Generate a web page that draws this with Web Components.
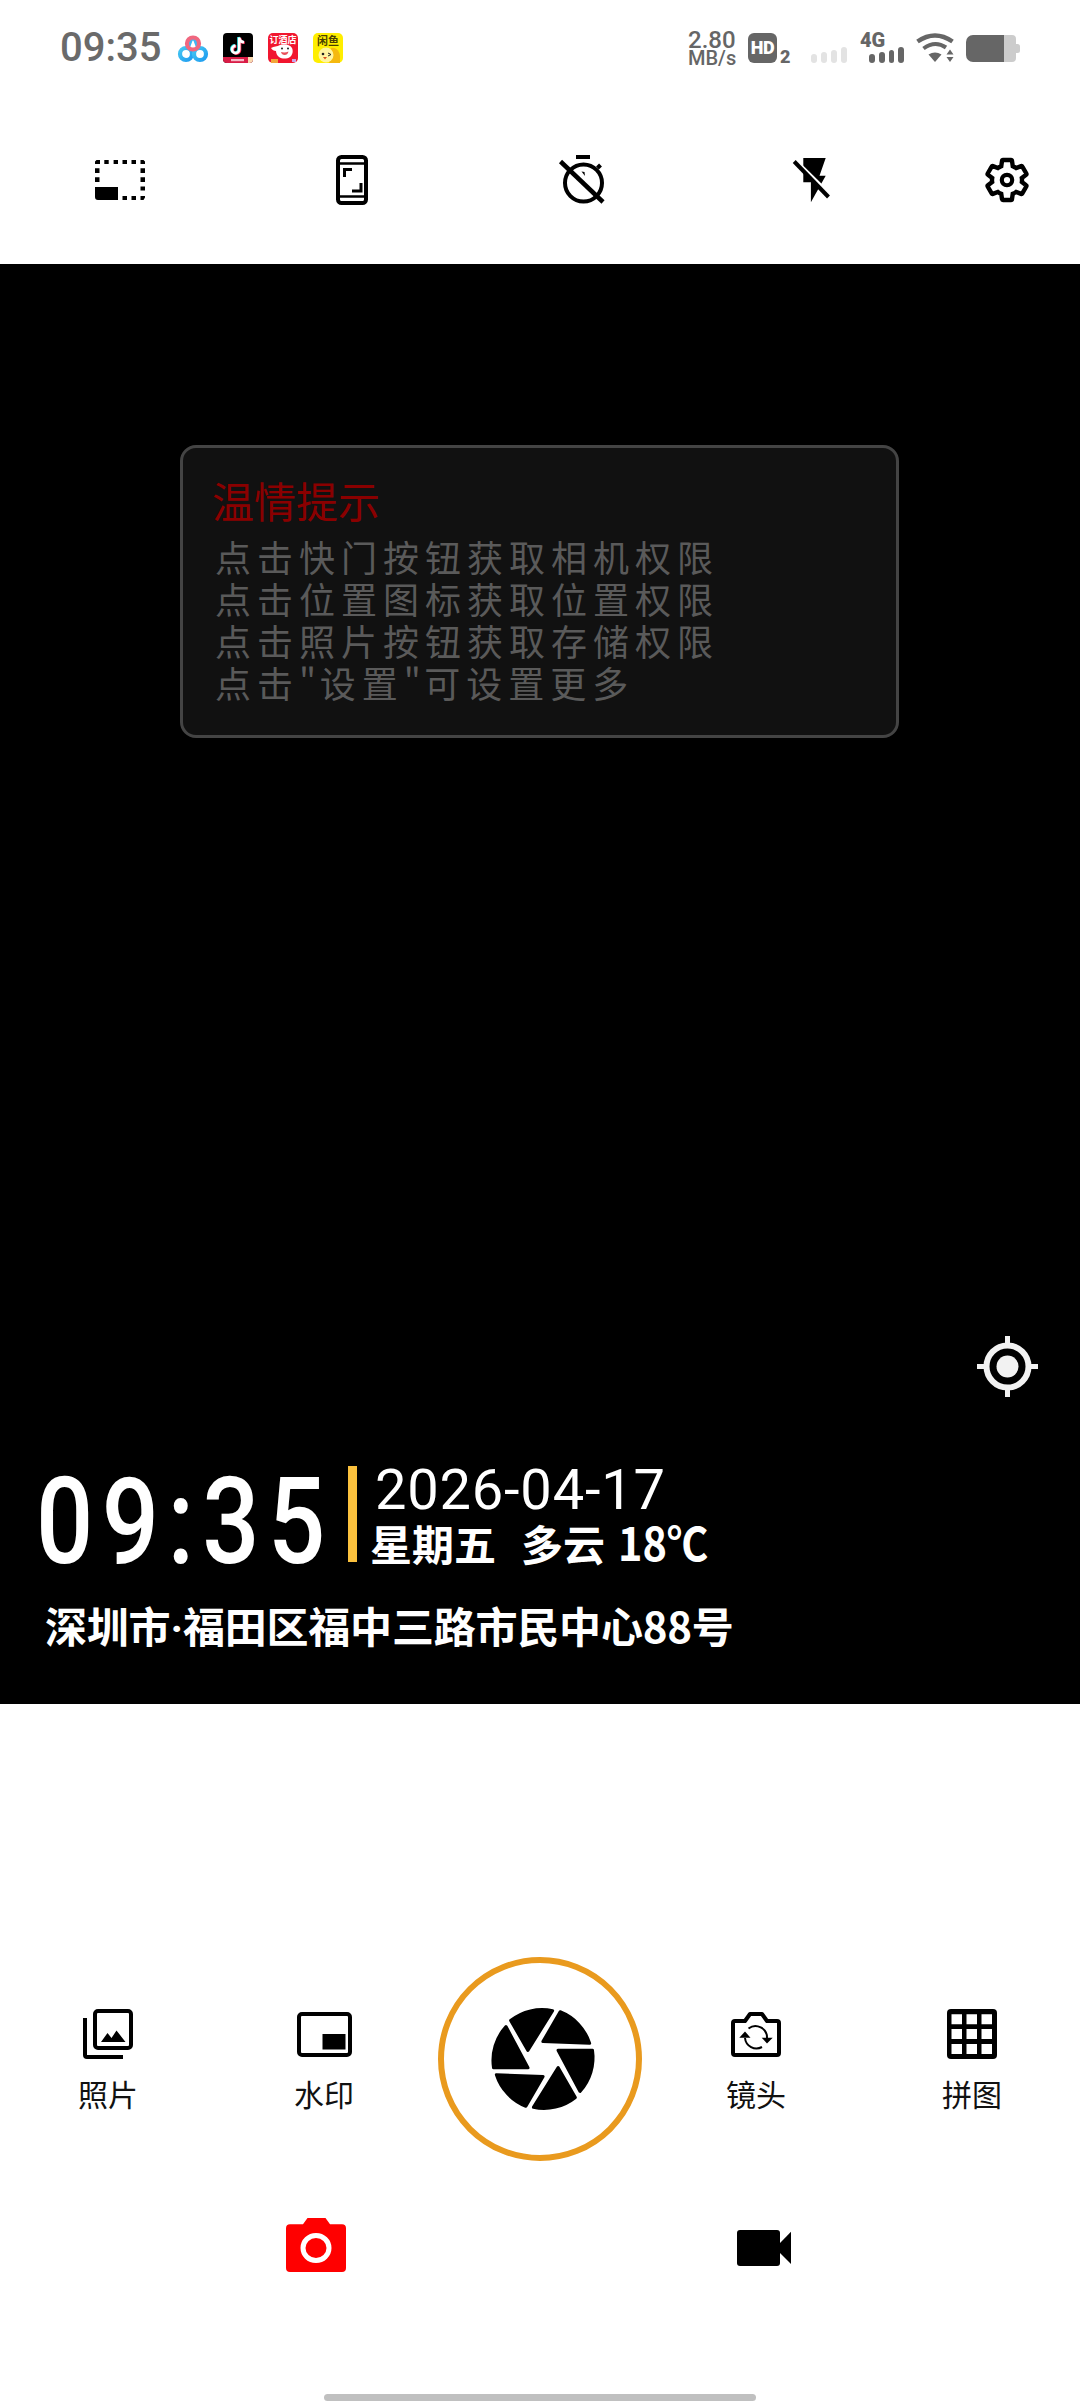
<!DOCTYPE html>
<html lang="zh">
<head>
<meta charset="utf-8">
<title>水印相机</title>
<style>
  html, body { margin: 0; padding: 0; background: #fff; }
  body { font-family: Roboto, "Noto Sans CJK SC", sans-serif; }
</style>
</head>
<body>
<camera-page></camera-page>

<script>
// every icon keeps its own box so it can sit in the flow at its real size
const ICONS = {
  crop: { w: 50, h: 40, svg: `
    <path fill="#000" d="M0 27h23v13H3a3 3 0 0 1-3-3zM1.500 0H5v4H0V1.500zM9.300 0h4.400v4H9.300zM18.600 0H23v4h-4.400zM27.500 0H32v4h-4.500zM36.500 0H41v4h-4.500zM45.500 0h3L50 1.500V4h-4.500zM0 8.300h4.500v4.700H0zM0 17.300h4.500V22H0zM45.500 8.300H50V13h-4.500zM45.500 17.300H50V22h-4.500zM45.500 26.600H50v4h-4.500zM27.500 36H32v4h-4.500zM36.500 36H41v4h-4.500zM45.500 36H50v1.500L48.500 40h-3z"/>` },
  phone: { w: 32, h: 50, svg: `
    <rect x="2" y="2" width="28" height="46" rx="3.500" fill="none" stroke="#000" stroke-width="4"/>
    <path d="M3 8.500h26M3 41.500h26" stroke="#000" stroke-width="2.500"/>
    <path d="M8.500 22v-7.500H16M25 28v8h-9" fill="none" stroke="#000" stroke-width="3"/>` },
  timer: { w: 46, h: 50, svg: `
    <circle cx="24.500" cy="28" r="18.500" fill="none" stroke="#000" stroke-width="4"/>
    <path d="M17 2h14" stroke="#000" stroke-width="4"/>
    <path d="M38.500 13l3-3" stroke="#000" stroke-width="4"/>
    <path d="M22.500 16.500l3 .5.500 4z" fill="#000"/>
    <path d="M1.500 6.500L44 47" stroke="#000" stroke-width="4.500"/>` },
  flash: { w: 37, h: 45, svg: `
    <path fill="#000" d="M10.300 0h22.400l-6.200 17.700h6.200L17.900 44.300V24.300h-7.600z"/>
    <path d="M3.500 3L38 37" stroke="#fff" stroke-width="3"/>
    <path d="M1.200 3.500L35.500 39" stroke="#000" stroke-width="4"/>` },
  gear: { w: 50, h: 50, vb: '0 0 24 24', svg: `
    <path fill="none" stroke="#000" stroke-width="2.100" d="M19.140 12.940c.04-.3.06-.61.06-.94 0-.32-.02-.64-.07-.94l2.030-1.580c.18-.14.23-.41.12-.61l-1.920-3.320c-.12-.22-.37-.29-.59-.22l-2.390.96c-.5-.38-1.030-.7-1.620-.94l-.36-2.540c-.04-.24-.24-.41-.48-.41h-3.840c-.24 0-.43.17-.47.41l-.36 2.540c-.59.24-1.130.57-1.620.94l-2.390-.96c-.22-.08-.47 0-.59.22L2.740 8.870c-.12.21-.08.47.12.61l2.030 1.580c-.05.3-.09.63-.09.94s.02.64.07.94l-2.030 1.580c-.18.14-.23.41-.12.61l1.920 3.320c.12.22.37.29.59.22l2.390-.96c.5.38 1.030.7 1.620.94l.36 2.540c.05.24.24.41.48.41h3.840c.24 0 .44-.17.47-.41l.36-2.540c.59-.24 1.130-.56 1.620-.94l2.390.96c.22.08.47 0 .59-.22l1.920-3.320c.12-.22.07-.47-.12-.61l-2.010-1.580z"/>
    <circle cx="12" cy="12" r="2.500" fill="none" stroke="#000" stroke-width="2"/>` },
  locate: { w: 61, h: 61, svg: `
    <circle cx="30.500" cy="30.500" r="21" fill="none" stroke="#f2f2f2" stroke-width="6"/>
    <circle cx="30.500" cy="30.500" r="11" fill="#f2f2f2"/>
    <path d="M30.500 0v9M30.500 52v9M0 30.500h9M52 30.500h9" stroke="#f2f2f2" stroke-width="5"/>` },
  photos: { w: 50, h: 50, svg: `
    <rect x="12" y="2" width="36" height="37" rx="3" fill="none" stroke="#000" stroke-width="4"/>
    <path d="M2 9v37a2 2 0 0 0 2 2h36" fill="none" stroke="#000" stroke-width="4"/>
    <path fill="#000" d="M18 33l6.500-9 4 5 5-7.500 9 11.500z"/>` },
  pip: { w: 55, h: 45, svg: `
    <rect x="2" y="2" width="51" height="41" rx="3" fill="none" stroke="#000" stroke-width="4"/>
    <rect x="25.500" y="22" width="23" height="15.500" fill="#000"/>` },
  flip: { w: 50, h: 45, svg: `
    <path fill="none" stroke="#000" stroke-width="4" stroke-linejoin="round" d="M4 9h10l5-7h12l5 7h10a2 2 0 0 1 2 2v30a2 2 0 0 1-2 2H4a2 2 0 0 1-2-2V11a2 2 0 0 1 2-2z"/>
    <path fill="none" stroke="#000" stroke-width="2" d="M17.500 16.500A11.500 11.500 0 0 1 36 26M14 26a11.500 11.500 0 0 0 17 9"/>
    <path fill="#000" d="M30.700 25.700h11L36 31.500zM8.300 25.700H19.500L14 19.500z"/>` },
  grid: { w: 50, h: 50, svg: `
    <rect width="50" height="50" rx="4" fill="#000"/>
    <path fill="#fff" d="M4.500 5.300H15v10H4.500zM19.500 5.300H30v10H19.500zM34.500 5.300H45v10H34.500zM4.500 20H15v10H4.500zM19.500 20H30v10H19.500zM34.500 20H45v10H34.500zM4.500 35H15v10H4.500zM19.500 35H30v10H19.500zM34.500 35H45v10H34.500z"/>` },
  aperture: { w: 108, h: 108, vb: '-54 -54 108 108', svg: `
    <defs><path id="blade" fill="#000" stroke="#000" stroke-width="3" stroke-linejoin="round" d="M-37 -32.500L-15 8.800H-49.500A50.500 50.500 0 0 1 -37 -32.500z"/></defs>
    <use href="#blade"/><use href="#blade" transform="rotate(60)"/><use href="#blade" transform="rotate(120)"/>
    <use href="#blade" transform="rotate(180)"/><use href="#blade" transform="rotate(240)"/><use href="#blade" transform="rotate(300)"/>` },
  photoMode: { w: 60, h: 54, svg: `
    <path fill="#f00" d="M4 6.300h13L21.500 0h18L44 6.300h12a4 4 0 0 1 4 4V50a4 4 0 0 1-4 4H4a4 4 0 0 1-4-4V10.300a4 4 0 0 1 4-4z"/>
    <ellipse cx="30" cy="30" rx="13" ry="12.500" fill="none" stroke="#fff" stroke-width="5"/>` },
  videoMode: { w: 54, h: 36, svg: `
    <rect width="43" height="36" rx="3" fill="#000"/>
    <path fill="#000" d="M43 13L54 1.700V34L43 23z"/>` },
  wifi: { w: 38, h: 30, svg: `
    <path fill="none" stroke="#666" stroke-width="4.500" d="M1.500 8.500Q19-3.500 36.500 8.500"/>
    <path fill="none" stroke="#666" stroke-width="4" d="M7.500 15.500Q19 7 30 14.500"/>
    <path fill="#666" d="M12.500 21.500Q19 17.500 25.500 21.500L19 29z"/>
    <path fill="#666" d="M34 16.500l3.500 5h-7zM30.500 24h7L34 29z"/>` },
  battery: { w: 54, h: 27, svg: `
    <path fill="#666" d="M7 0h31v27H7a7 7 0 0 1-7-7V7a7 7 0 0 1 7-7z"/>
    <path fill="#ccc" d="M38 0h8a4 4 0 0 1 4 4v5h1.500a2.500 2.500 0 0 1 2.500 2.500v4a2.500 2.500 0 0 1-2.500 2.500H50v5a4 4 0 0 1-4 4h-8z"/>` },
  netdisk: { w: 30, h: 30, svg: `
    <defs><linearGradient id="nd" x1="0" y1="0" x2="1" y2="1"><stop offset="0" stop-color="#45c6f2"/><stop offset="1" stop-color="#1f9df0"/></linearGradient></defs>
    <circle cx="8" cy="21" r="6" fill="none" stroke="url(#nd)" stroke-width="4.200"/>
    <circle cx="22" cy="21" r="6" fill="none" stroke="url(#nd)" stroke-width="4.200"/>
    <path d="M9.500 15.500L13 6a6 6 0 0 1 4 0l3.500 9.500" fill="none" stroke="#3fb6f3" stroke-width="4"/>
    <circle cx="15" cy="10.500" r="6" fill="none" stroke="#f0677f" stroke-width="4.200"/>` },
  douyin: { w: 30, h: 30, svg: `
    <rect width="30" height="30" rx="4" fill="#000"/>
    <path d="M0 24h30v2a4 4 0 0 1-4 4H4a4 4 0 0 1-4-4z" fill="#d91c46"/>
    <path d="M25 24h5v2a4 4 0 0 1-4 4h-1z" fill="#f9d9b0"/>
    <rect x="8" y="26" width="13" height="2.200" fill="#f6b8c6"/>
    <g fill="none" stroke-width="2.600">
      <path stroke="#25e8e8" d="M15.500 4v12a3.600 3.600 0 1 1-3.600-3.600M15.500 4c.4 2.800 2.200 4.600 4.800 4.800"/>
      <path stroke="#f5284f" d="M17 5v12a3.600 3.600 0 1 1-3.600-3.600M17 5c.4 2.800 2.200 4.600 4.800 4.800"/>
      <path stroke="#fff" d="M16.200 4.500v12a3.600 3.600 0 1 1-3.600-3.600M16.200 4.500c.4 2.800 2.200 4.600 4.800 4.800"/>
    </g>` },
  hotel: { w: 30, h: 30, svg: `
    <rect width="30" height="30" rx="5" fill="#f1162f"/>
    <text x="15" y="10" text-anchor="middle" font-size="9" font-weight="700" fill="#fff" font-family="'Noto Sans CJK SC',sans-serif">订酒店</text>
    <path fill="#fff" d="M3 15c3-2 6-1 9-3 4-1.500 10-.5 12 3 1.500 3 .5 7-2 9-3 2-8 2-11 0-2-1.500-3-4-3-6-2 0-4-1-5-3z"/>
    <path fill="#e8505a" d="M13 19c2.500.8 5 .6 7.500-.5-.5 2.500-2 3.500-3.800 3.500s-3.400-1-3.700-3z"/>
    <circle cx="14" cy="15.500" r="1" fill="#222"/><circle cx="20" cy="15.500" r="1" fill="#222"/>
    <path fill="#f2a63a" d="M3 26h7v4H3z"/><path fill="#c8a6e8" d="M24 26h4v3h-4z"/>` },
  xianyu: { w: 30, h: 30, svg: `
    <rect width="30" height="30" rx="5" fill="#ffee00"/>
    <text x="15" y="12" text-anchor="middle" font-size="11" font-weight="700" fill="#4a3f00" font-family="'Noto Sans CJK SC',sans-serif">闲鱼</text>
    <path fill="#f5b90f" d="M18 15c5-1 9 3 9 9v6H16z"/>
    <circle cx="13" cy="22" r="7.500" fill="#fff4a0"/>
    <circle cx="10" cy="21" r="1.300" fill="#222"/>
    <path d="M15 20l3 1.500-3 1.500" fill="none" stroke="#222" stroke-width="1"/>
    <path fill="#d9501e" d="M10 24h4l-2 2.500z"/>` }
};

class UiIcon extends HTMLElement {
  connectedCallback() {
    const icon = ICONS[this.getAttribute('name')];
    this.attachShadow({ mode: 'open' });
    this.shadowRoot.innerHTML = `
      <style>
        :host { display: block; flex: none; width: ${icon.w}px; height: ${icon.h}px; }
        svg { display: block; overflow: visible; }
      </style>
      <svg width="${icon.w}" height="${icon.h}" viewBox="${icon.vb || `0 0 ${icon.w} ${icon.h}`}" aria-hidden="true">${icon.svg}</svg>
    `;
  }
}

// four rising bars of the signal meter
class SignalBars extends HTMLElement {
  connectedCallback() {
    this.attachShadow({ mode: 'open' });
    this.shadowRoot.innerHTML = `
      <style>
        :host { display: flex; flex: none; align-items: flex-end; gap: 4px; height: 16px; color: #666; }
        i { display: block; width: 6px; border-radius: 3px; background: currentColor; }
      </style>
      <i style="height:9px"></i><i style="height:11px"></i><i style="height:13px"></i><i style="height:16px"></i>
    `;
  }
}

class StatusBar extends HTMLElement {
  connectedCallback() {
    this.attachShadow({ mode: 'open' });
    this.shadowRoot.innerHTML = `
      <style>
        :host {
          display: flex; flex: none; align-items: center; height: 96px;
          padding: 0 60px; box-sizing: border-box; color: #666;
          font-family: Roboto, sans-serif;
        }
        .clock { font-size: 40px; font-weight: 500; line-height: 40px; width: 118px; color: #6a6a6a; }
        .apps { display: flex; gap: 15px; }
        .right { display: flex; align-items: center; margin-left: auto; }
        .speed { width: 48px; margin-right: 12px; font-weight: 500; text-align: left; }
        .speed b { display: block; font-weight: 500; font-size: 24px; line-height: 20px; }
        .speed span { display: block; font-size: 20px; line-height: 17px; white-space: nowrap; }
        .hd { display: flex; align-items: flex-end; margin-right: 21px; height: 30px; }
        .hd b {
          display: block; width: 29px; height: 30px; border-radius: 6px; background: #666; color: #fff;
          font-size: 18px; font-weight: 900; line-height: 30px; text-align: center; letter-spacing: -.5px;
        }
        .hd span { width: 10px; font-size: 18px; font-weight: 900; line-height: 13px; margin-left: 3px; }
        .off { color: #e3e3e3; margin-right: 13px; margin-top: 14px; }
        .net { display: flex; flex-direction: column; width: 44px; margin-right: 12px; }
        .net b { font-size: 20px; font-weight: 900; line-height: 14px; }
        .net signal-bars { margin-left: 9px; }
        ui-icon[name=wifi] { margin-right: 12px; }
      </style>
      <span class="clock">09:35</span>
      <div class="apps">
        <ui-icon name="netdisk"></ui-icon>
        <ui-icon name="douyin"></ui-icon>
        <ui-icon name="hotel"></ui-icon>
        <ui-icon name="xianyu"></ui-icon>
      </div>
      <div class="right">
        <div class="speed"><b>2.80</b><span>MB/s</span></div>
        <div class="hd"><b>HD</b><span>2</span></div>
        <signal-bars class="off"></signal-bars>
        <div class="net"><b>4G</b><signal-bars></signal-bars></div>
        <ui-icon name="wifi"></ui-icon>
        <ui-icon name="battery"></ui-icon>
      </div>
    `;
  }
}

class TopToolbar extends HTMLElement {
  connectedCallback() {
    this.attachShadow({ mode: 'open' });
    // the spacing in the app is uneven, the gear sits closer than the rest
    const items = [
      { name: 'crop', gap: 0 },
      { name: 'phone', gap: 191 },
      { name: 'timer', gap: 191 },
      { name: 'flash', gap: 188 },
      { name: 'gear', gap: 152 }
    ];
    this.shadowRoot.innerHTML = `
      <style>
        :host { display: flex; flex: none; align-items: center; height: 168px; padding-left: 95px; box-sizing: border-box; }
      </style>
      ${items.map(i => `<ui-icon name="${i.name}" style="margin-left:${i.gap}px"></ui-icon>`).join('')}
    `;
  }
}

class TipCard extends HTMLElement {
  connectedCallback() {
    this.attachShadow({ mode: 'open' });
    this.shadowRoot.innerHTML = `
      <style>
        :host {
          display: block; width: 719px; height: 293px; box-sizing: border-box;
          background: #111; border: 3px solid #444; border-radius: 16px;
          padding: 27px 0 0 30px;
          font-family: "Noto Sans CJK SC", sans-serif;
        }
        h2 { margin: 0 0 0 -1px; font-size: 42px; font-weight: 400; line-height: 50px; color: #8a0000; }
        p { margin: 10px 0 0 2px; font-size: 36px; font-weight: 400; line-height: 42px; letter-spacing: 6px; color: #5a5a5a; white-space: nowrap; }
      </style>
      <h2><slot name="title"></slot></h2>
      <p><slot></slot></p>
    `;
  }
}

class TimeStamp extends HTMLElement {
  connectedCallback() {
    this.attachShadow({ mode: 'open' });
    this.shadowRoot.innerHTML = `
      <style>
        :host { display: block; color: #fff; font-family: Roboto, "Noto Sans CJK SC", sans-serif; }
        .row { display: flex; height: 100px; padding-left: 36px; }
        .clock {
          width: 312px; height: 96px; font-size: 120px; font-weight: 500; line-height: 112px; letter-spacing: 10px;
          white-space: nowrap; transform: scaleX(.84); transform-origin: left top;
        }
        .bar { width: 9px; height: 96px; background: #fbc13d; }
        .info { margin-left: 18px; }
        .date { font-size: 56px; font-weight: 400; line-height: 48px; letter-spacing: .8px; white-space: nowrap; }
        .weather {
          display: flex; align-items: baseline; margin: 2px 0 0 -5px; font-size: 42px; font-weight: 700; line-height: 50px;
          white-space: nowrap; font-family: "Noto Sans CJK SC", sans-serif;
        }
        .weather .sky { margin-left: 25px; }
        .weather .temp { margin-left: 13px; font-size: 46px; font-weight: 700; transform: scaleX(.9); transform-origin: left center; }
        .address {
          margin: 34px 0 0 45px; font-size: 42px; font-weight: 700; line-height: 50px; letter-spacing: -.2px; white-space: nowrap;
          font-family: "Noto Sans CJK SC", sans-serif;
        }
        .address i { font: inherit; font-family: Roboto, sans-serif; }
      </style>
      <div class="row">
        <div class="clock">09:35</div>
        <div class="bar"></div>
        <div class="info">
          <div class="date">2026-04-17</div>
          <div class="weather"><span>星期五</span><span class="sky">多云</span><span class="temp">18℃</span></div>
        </div>
      </div>
      <div class="address">深圳市<i>·</i>福田区福中三路市民中心88号</div>
    `;
  }
}

class ViewFinder extends HTMLElement {
  connectedCallback() {
    this.attachShadow({ mode: 'open' });
    this.shadowRoot.innerHTML = `
      <style>
        :host {
          display: flex; flex: none; flex-direction: column; height: 1440px;
          background: #000; box-sizing: border-box; padding: 181px 0 50px;
        }
        ::slotted(tip-card) { margin-left: 180px; }
        ::slotted(ui-icon) { margin: auto 42px 69px auto; }
      </style>
      <slot></slot>
    `;
  }
}

class ToolButton extends HTMLElement {
  connectedCallback() {
    this.attachShadow({ mode: 'open' });
    this.shadowRoot.innerHTML = `
      <style>
        :host { display: flex; flex-direction: column; align-items: center; }
        .icon { display: flex; align-items: center; justify-content: center; height: 50px; }
        .label { margin-top: 14px; font: 30px/40px "Noto Sans CJK SC", sans-serif; color: #111; }
      </style>
      <div class="icon"><slot name="icon"></slot></div>
      <div class="label"><slot></slot></div>
    `;
  }
}

class ShutterButton extends HTMLElement {
  connectedCallback() {
    this.attachShadow({ mode: 'open' });
    this.shadowRoot.innerHTML = `
      <style>
        :host {
          display: flex; align-items: center; justify-content: center; box-sizing: border-box;
          width: 204px; height: 204px; padding-left: 6px;
          border: 6px solid #e99a1e; border-radius: 50%;
        }
      </style>
      <ui-icon name="aperture"></ui-icon>
    `;
  }
}

class CapturePanel extends HTMLElement {
  connectedCallback() {
    this.attachShadow({ mode: 'open' });
    this.shadowRoot.innerHTML = `
      <style>
        :host { display: flex; flex: 1; flex-direction: column; background: #fff; padding-top: 253px; }
        .controls { display: grid; grid-template-columns: repeat(5, 216px); height: 204px; }
        tool-button { margin-top: 52px; }
        shutter-button { justify-self: center; }
        .modes { display: flex; align-items: flex-start; margin-top: 57px; padding-left: 286px; }
        ui-icon[name=videoMode] { margin: 12px 0 0 391px; }
        .home { width: 432px; height: 7px; margin: auto auto 3px; border-radius: 4px; background: #c0c0c0; }
      </style>
      <div class="controls">
        <tool-button><ui-icon slot="icon" name="photos"></ui-icon>照片</tool-button>
        <tool-button><ui-icon slot="icon" name="pip"></ui-icon>水印</tool-button>
        <shutter-button></shutter-button>
        <tool-button><ui-icon slot="icon" name="flip"></ui-icon>镜头</tool-button>
        <tool-button><ui-icon slot="icon" name="grid"></ui-icon>拼图</tool-button>
      </div>
      <div class="modes">
        <ui-icon name="photoMode"></ui-icon>
        <ui-icon name="videoMode"></ui-icon>
      </div>
      <div class="home"></div>
    `;
  }
}

class CameraPage extends HTMLElement {
  connectedCallback() {
    this.attachShadow({ mode: 'open' });
    this.shadowRoot.innerHTML = `
      <style>
        :host { display: flex; flex-direction: column; width: 1080px; height: 2404px; overflow: hidden; background: #fff; }
      </style>
      <status-bar></status-bar>
      <top-toolbar></top-toolbar>
      <view-finder>
        <tip-card>
          <span slot="title">温情提示</span>
          点击快门按钮获取相机权限<br>
          点击位置图标获取位置权限<br>
          点击照片按钮获取存储权限<br>
          点击<span style="letter-spacing:3.5px">"</span>设置<span style="letter-spacing:3.5px">"</span>可设置更多
        </tip-card>
        <ui-icon name="locate"></ui-icon>
        <time-stamp></time-stamp>
      </view-finder>
      <capture-panel></capture-panel>
    `;
  }
}

customElements.define('ui-icon', UiIcon);
customElements.define('signal-bars', SignalBars);
customElements.define('status-bar', StatusBar);
customElements.define('top-toolbar', TopToolbar);
customElements.define('tip-card', TipCard);
customElements.define('time-stamp', TimeStamp);
customElements.define('view-finder', ViewFinder);
customElements.define('tool-button', ToolButton);
customElements.define('shutter-button', ShutterButton);
customElements.define('capture-panel', CapturePanel);
customElements.define('camera-page', CameraPage);
</script>
</body>
</html>
